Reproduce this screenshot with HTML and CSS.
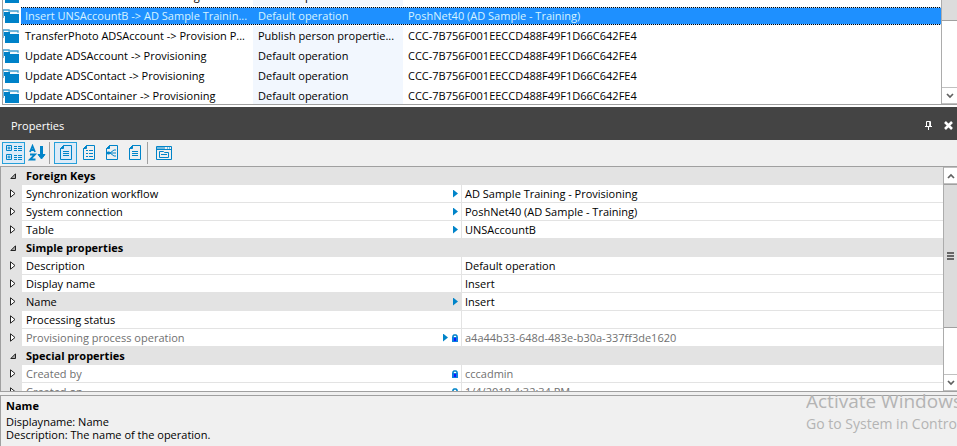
FILE: index.html
```html
<!DOCTYPE html>
<html lang="en">
<head>
<meta charset="utf-8">
<title>Properties</title>
<link rel="stylesheet" href="styles.css">
</head>
<body>
<svg class="defs" aria-hidden="true">
  <symbol id="folder" viewBox="0 0 17 14"><path d="M0 9V1h6v1h9v2" fill="none" stroke="#3f9fd0" stroke-width="1.4"/><path d="M1 3h6v2h9v9H2V7H1z" fill="#0082c8"/><path d="M7.500 3v1H16" fill="none" stroke="#d8ecf6" stroke-width=".7"/></symbol>
  <symbol id="lock" viewBox="0 0 6 8"><path d="M1 4V2l1-1h2l1 1v2" fill="none" stroke="#0084c9" stroke-width="1.6"/><path d="M0 3h6v5H0z" fill="#0b7fe0"/><path d="M2 4h2v3H2z" fill="#1414ff"/></symbol>
  <symbol id="closed" viewBox="0 0 6 9"><path d="M.5.8v7.4L5 4.5z" fill="#fff" stroke="#222"/></symbol>
  <symbol id="open" viewBox="0 0 6 6"><path d="M5.5.8v4.7H.8z" fill="#aaa" stroke="#222"/></symbol>
  <symbol id="up" viewBox="0 0 8 6"><path d="M1 5l3-3 3 3" fill="none" stroke="#606060" stroke-width="1.7"/></symbol>
  <symbol id="down" viewBox="0 0 8 6"><path d="M1 1l3 3 3-3" fill="none" stroke="#606060" stroke-width="1.7"/></symbol>
  <symbol id="sheet" viewBox="0 0 18 18"><path d="M6.500 1.500h8v14h-11v-11z"/><path d="M3.500 4.500h3v-3z" fill="#0084c9"/></symbol>
</svg>

<section class="list">
  <div class="list-view">
    <table class="operations">
      <colgroup><col class="c-icon"><col class="c-name"><col class="c-operation"><col></colgroup>
      <tbody>
        <tr><td><svg class="folder"><use href="#folder"/></svg></td><td>Insert UNSAccount -&gt; Provisioning</td><td>Default operation</td><td>CCC-7B756F001EECCD488F49F1D66C642FE4</td></tr>
        <tr class="selected"><td><svg class="folder"><use href="#folder"/></svg></td><td>Insert UNSAccountB -&gt; AD Sample Trainin...</td><td>Default operation</td><td>PoshNet40 (AD Sample - Training)</td></tr>
        <tr><td><svg class="folder"><use href="#folder"/></svg></td><td>TransferPhoto ADSAccount -&gt; Provision P...</td><td>Publish person propertie...</td><td>CCC-7B756F001EECCD488F49F1D66C642FE4</td></tr>
        <tr><td><svg class="folder"><use href="#folder"/></svg></td><td>Update ADSAccount -&gt; Provisioning</td><td>Default operation</td><td>CCC-7B756F001EECCD488F49F1D66C642FE4</td></tr>
        <tr><td><svg class="folder"><use href="#folder"/></svg></td><td>Update ADSContact -&gt; Provisioning</td><td>Default operation</td><td>CCC-7B756F001EECCD488F49F1D66C642FE4</td></tr>
        <tr><td><svg class="folder"><use href="#folder"/></svg></td><td>Update ADSContainer -&gt; Provisioning</td><td>Default operation</td><td>CCC-7B756F001EECCD488F49F1D66C642FE4</td></tr>
      </tbody>
    </table>
  </div>
  <div class="scrollbar">
    <div class="thumb thumb-list"></div>
    <div class="track"></div>
    <button class="arrow" aria-label="Scroll down"><svg><use href="#down"/></svg></button>
  </div>
</section>

<section class="properties">
  <header class="titlebar">
    <h1>Properties</h1>
    <button aria-label="Pin"><svg width="7" height="9" viewBox="0 0 7 9"><path d="M1.500 5V.5h4V5M0 5.500h7M3.500 6v3M4.700 1v4" fill="none" stroke="#fff"/></svg></button>
    <button aria-label="Close"><svg width="9" height="9" viewBox="0 0 9 9"><path d="M1 1l7 7M8 1L1 8" stroke="#fff" stroke-width="2.600"/></svg></button>
  </header>
  <div class="toolbar">
    <button class="on" aria-label="Categorized"><svg viewBox="0 0 18 18"><path d="M1.500 1.500h5v5h-5zM1.500 10.500h5v5h-5zM4 2.500v3M2.500 4h3M4 11.500v3M2.500 13h3"/><path d="M9 2.500h3M13 2.500h4M9 4.500h3M13 4.500h4M9 6.500h3M13 6.500h4M9 11.500h3M13 11.500h4M9 13.500h3M13 13.500h4M9 15.500h3M13 15.500h4"/></svg></button>
    <button aria-label="Sort alphabetically"><svg viewBox="0 0 18 18"><path d="M2 8l2.500-6L7 8M3 6h3M2 10.500h5l-5 5h5.500" stroke-width="1.800"/><path d="M13.500 2v9" stroke-width="3"/><path d="M10 10.500h7l-3.500 4.500z" fill="#0084c9"/></svg></button>
    <span class="divider"></span>
    <button class="on" aria-label="Properties"><svg viewBox="0 0 18 18"><use href="#sheet"/><path d="M6 7.500h6M6 9.500h6M6 11.500h6"/></svg></button>
    <button aria-label="Simple properties"><svg viewBox="0 0 18 18"><use href="#sheet"/><path d="M6 6.500h2M9 6.500h4M6 9.500h2M9 9.500h4M6 12.500h2M9 12.500h4"/></svg></button>
    <button aria-label="References"><svg viewBox="0 0 18 18"><use href="#sheet"/><path d="M5 9h2l4-3h2M7 9h6M7 9l4 3h2"/><path d="M4.500 8h2v2h-2z" fill="#0084c9"/></svg></button>
    <button aria-label="Special properties"><svg viewBox="0 0 18 18"><use href="#sheet"/><path d="M6 7.500h6M6 9.500h6M6 11.500h6"/></svg></button>
    <span class="divider"></span>
    <button aria-label="Property pages"><svg viewBox="0 0 18 18"><path d="M1.500 2.500h15v13h-15zM1.500 5.500h15M2 4h8M12 4h1M14 4h1M4.500 13.500v-6h4l1 1h4v5zM6 10.500h6"/></svg></button>
  </div>

  <div class="grid">
    <div class="grid-view">
      <table class="props">
        <colgroup><col class="p-expand"><col class="p-name"><col></colgroup>
        <tbody>
          <tr class="category"><td><svg class="open"><use href="#open"/></svg></td><th colspan="2">Foreign Keys</th></tr>
          <tr><td><svg class="closed"><use href="#closed"/></svg></td><th><div>Synchronization workflow<i class="mark"></i></div></th><td>AD Sample Training - Provisioning</td></tr>
          <tr><td><svg class="closed"><use href="#closed"/></svg></td><th><div>System connection<i class="mark"></i></div></th><td>PoshNet40 (AD Sample - Training)</td></tr>
          <tr><td><svg class="closed"><use href="#closed"/></svg></td><th><div>Table<i class="mark"></i></div></th><td>UNSAccountB</td></tr>
          <tr class="category"><td><svg class="open"><use href="#open"/></svg></td><th colspan="2">Simple properties</th></tr>
          <tr><td><svg class="closed"><use href="#closed"/></svg></td><th>Description</th><td>Default operation</td></tr>
          <tr><td><svg class="closed"><use href="#closed"/></svg></td><th>Display name</th><td>Insert</td></tr>
          <tr class="current"><td><svg class="closed"><use href="#closed"/></svg></td><th><div>Name<i class="mark"></i></div></th><td>Insert</td></tr>
          <tr><td><svg class="closed"><use href="#closed"/></svg></td><th>Processing status</th><td></td></tr>
          <tr class="locked"><td><svg class="closed"><use href="#closed"/></svg></td><th><div>Provisioning process operation<i class="mark"></i><svg class="lock"><use href="#lock"/></svg></div></th><td>a4a44b33-648d-483e-b30a-337ff3de1620</td></tr>
          <tr class="category"><td><svg class="open"><use href="#open"/></svg></td><th colspan="2">Special properties</th></tr>
          <tr class="locked"><td><svg class="closed"><use href="#closed"/></svg></td><th><div>Created by<svg class="lock"><use href="#lock"/></svg></div></th><td>cccadmin</td></tr>
          <tr class="locked"><td><svg class="closed"><use href="#closed"/></svg></td><th><div>Created on<svg class="lock"><use href="#lock"/></svg></div></th><td>1/4/2018 4:32:34 PM</td></tr>
        </tbody>
      </table>
    </div>
    <div class="scrollbar">
      <button class="arrow arrow-up" aria-label="Scroll up"><svg><use href="#up"/></svg></button>
      <div class="thumb thumb-grid"><i class="grip"></i></div>
      <div class="track"></div>
      <button class="arrow" aria-label="Scroll down"><svg><use href="#down"/></svg></button>
    </div>
  </div>

  <div class="help">
    <h2>Name</h2>
    <p>Displayname: Name</p>
    <p>Description: The name of the operation.</p>
  </div>
</section>

<aside class="watermark">
  <p class="watermark-title">Activate Windows</p>
  <p>Go to System in Control</p>
</aside>
</body>
</html>
```
FILE: styles.css
```css
* { box-sizing: border-box; }
body {
  margin: 0;
  height: 100vh;
  display: flex;
  flex-direction: column;
  overflow: hidden;
  position: relative;
  background: #fff;
  color: #000;
  font: 11px/14px "Open Sans", "Noto Sans", sans-serif;
}
h1, h2, p { margin: 0; font-size: inherit; }
button { border: 0; padding: 0; background: none; display: flex; align-items: center; justify-content: center; }
table { width: 100%; border-collapse: separate; border-spacing: 0; table-layout: fixed; }
td, th { padding: 0; text-align: left; font-weight: 400; white-space: nowrap; overflow: hidden; }
svg { display: block; }
.defs { position: absolute; width: 0; height: 0; }

.list {
  flex: none;
  display: flex;
  height: 105px;
  margin: 0 0 2px 2px;
  border-left: 1px solid #a0a0a0;
  border-bottom: 1px solid #a0a0a0;
}
.list-view { flex: 1; min-width: 0; overflow: hidden; }
.operations { margin-top: -14px; }
.operations td { height: 20px; padding: 0 4px; }
.operations td:first-child { padding: 0; }
.operations td:nth-child(3) { background: #f2f7fe; padding-left: 5px; }
.operations td:nth-child(4) { padding-left: 5px; }
.c-icon { width: 18px; }
.c-name { width: 232px; }
.c-operation { width: 150px; }
.folder { width: 17px; height: 14px; }
.operations .selected td:not(:first-child) {
  border-top: 1px solid #fff;
  border-bottom: 1px solid #fff;
  background:
    repeating-linear-gradient(90deg, #000 0 1px, #b8d8f8 1px 2px) top / 100% 1px no-repeat,
    repeating-linear-gradient(90deg, #000 0 1px, #b8d8f8 1px 2px) bottom / 100% 1px no-repeat,
    #1e90ff;
  background-clip: padding-box;
  color: #d5f3ff;
}

.scrollbar {
  flex: none;
  width: 16px;
  display: flex;
  flex-direction: column;
  border-left: 1px solid #acacac;
  background: #fff;
}
.thumb { background: #dcdcdc; border-bottom: 1px solid #a0a0a0; display: flex; align-items: center; justify-content: center; }
.thumb-list { flex: 20; }
.thumb-grid { flex: 143; border-top: 1px solid #a0a0a0; }
.track { flex: 67; }
.grid .track { flex: 47; }
.arrow { height: 17px; border: 1px solid #c0c0c0; border-left: 0; border-right: 0; background: #fff; }
.arrow svg { width: 8px; height: 6px; }
.grip { width: 7px; height: 8px; background: repeating-linear-gradient(#666 0 2px, transparent 2px 3px); }

.properties { flex: 1; min-height: 0; display: flex; flex-direction: column; background: #f0f0f0; }
.titlebar {
  flex: none;
  display: flex;
  align-items: center;
  gap: 12px;
  height: 33px;
  padding: 4px 4px 0 11px;
  background: #444;
  color: #fff;
}
.titlebar h1 { flex: 1; font-weight: 400; }
.toolbar { flex: none; display: flex; align-items: center; height: 26px; padding-left: 2px; }
.toolbar button { width: 23px; height: 22px; border: 1px solid transparent; }
.toolbar .on { border-color: #26a0da; background: #dcebf8; }
.toolbar svg { width: 18px; height: 18px; fill: none; stroke: #0084c9; }
.divider { width: 1px; height: 22px; margin: 0 4px 0 1px; background: #a0a0a0; }

.grid { flex: 1; min-height: 0; display: flex; border: 1px solid #a0a0a0; border-right: 0; background: #fff; }
.grid-view { flex: 1; min-width: 0; overflow: hidden; background: #e3e3e3; }
.grid .scrollbar { width: 14px; }
.props td, .props th { height: 18px; padding: 0 3px 0 4px; background: #fff; border-bottom: 1px solid #e3e3e3; }
.props td:first-child { padding: 0 0 0 9px; background: #e3e3e3; }
.props .category th { background: #e3e3e3; font-weight: 700; }
.props .current th { background: #e3e3e3; }
.props td:last-child { border-left: 1px solid #e3e3e3; padding-left: 3px; }
.props .locked { color: #707070; }
.props th div { display: flex; align-items: center; gap: 4px; }
.props th div > :first-child { margin-left: auto; }
.p-expand { width: 21px; }
.p-name { width: 439px; }
.closed { width: 6px; height: 9px; }
.open { width: 6px; height: 6px; }
.lock { width: 6px; height: 8px; }
.mark { width: 5px; height: 8px; background: #0084c9; clip-path: polygon(0 0, 100% 50%, 0 100%); }

.help {
  flex: none;
  height: 51px;
  margin-top: 3px;
  padding: 3px 5px 0;
  border: 1px solid #a0a0a0;
  border-right: 0;
  border-bottom: 0;
  line-height: 13px;
}
.help h2 { margin-bottom: 3px; }

.watermark {
  position: absolute;
  right: 0;
  bottom: 12px;
  width: 151px;
  overflow: hidden;
  white-space: nowrap;
  color: #b4b4b4;
  font: 14px/20px "Open Sans", sans-serif;
}
.watermark-title { font-size: 19px; line-height: 26px; }
```
